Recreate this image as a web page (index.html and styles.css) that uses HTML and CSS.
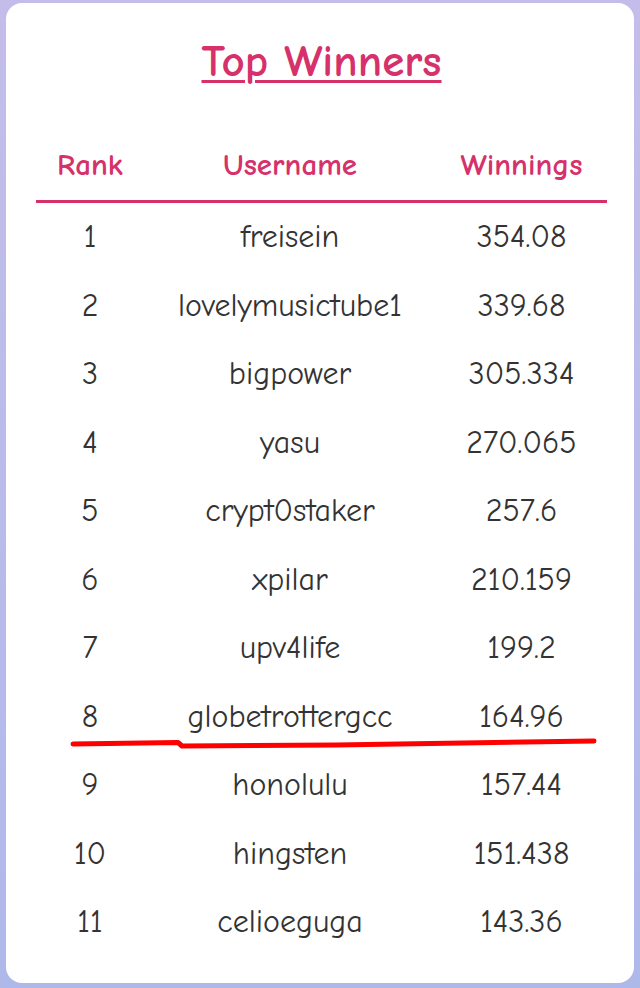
FILE: index.html
```html
<!DOCTYPE html>
<html lang="en">
<head>
<meta charset="utf-8">
<title>Top Winners</title>
<link rel="stylesheet" href="styles.css">
</head>
<body>
<main class="card">
  <h1 class="title">Top Winners</h1>
  <table class="board">
    <colgroup>
      <col class="col-rank">
      <col class="col-user">
      <col class="col-win">
    </colgroup>
    <thead>
      <tr><th>Rank</th><th>Username</th><th>Winnings</th></tr>
    </thead>
    <tbody>
      <tr><td>1</td><td>freisein</td><td>354.08</td></tr>
      <tr><td>2</td><td>lovelymusictube1</td><td>339.68</td></tr>
      <tr><td>3</td><td>bigpower</td><td>305.334</td></tr>
      <tr><td>4</td><td>yasu</td><td>270.065</td></tr>
      <tr><td>5</td><td>crypt0staker</td><td>257.6</td></tr>
      <tr><td>6</td><td>xpilar</td><td>210.159</td></tr>
      <tr><td>7</td><td>upv4life</td><td>199.2</td></tr>
      <tr><td>8</td><td>globetrottergcc</td><td>164.96</td></tr>
      <tr><td>9</td><td>honolulu</td><td>157.44</td></tr>
      <tr><td>10</td><td>hingsten</td><td>151.438</td></tr>
      <tr><td>11</td><td>celioeguga</td><td>143.36</td></tr>
    </tbody>
  </table>
  <svg class="mark" viewBox="0 0 628 980" aria-hidden="true">
    <path d="M67 741 L172 739.5 L176 743 L330 742 L588 738" />
  </svg>
</main>
</body>
</html>
```
FILE: styles.css
```css
html, body {
  margin: 0;
  padding: 0;
}

body {
  box-sizing: border-box;
  width: 640px;
  height: 988px;
  padding: 3px 6px 5px 6px;
  background: linear-gradient(180deg, #c4bde9 0%, #b8bbea 60%, #aeb9ea 100%);
  font-family: "Comic Sans MS", "Comic Neue", "Open Sans", "DejaVu Sans", sans-serif;
  color: #333333;
}

.card {
  position: relative;
  box-sizing: border-box;
  height: 980px;
  background: #ffffff;
  border-radius: 16px;
  padding: 34px 27px 0 30px;
}

.title {
  margin: 0;
  text-align: center;
  font-size: 45px;
  line-height: 48px;
  font-weight: 700;
  color: #d6316a;
  text-decoration: underline;
  text-decoration-thickness: 3px;
  text-underline-offset: 4px;
}

.board {
  width: 571px;
  margin-top: 46px;
  border-collapse: collapse;
  table-layout: fixed;
}

.col-rank { width: 108px; }
.col-user { width: 292px; }
.col-win { width: 171px; }

.board th,
.board td {
  padding: 0;
  text-align: center;
  vertical-align: middle;
  height: 68.5px;
  white-space: nowrap;
}

.board th {
  font-size: 31px;
  font-weight: 700;
  color: #d6316a;
  border-bottom: 3px solid #d6316a;
}

.board td {
  font-size: 32px;
  font-weight: 400;
  color: #333333;
}

.mark {
  position: absolute;
  left: 0;
  top: 0;
  width: 628px;
  height: 980px;
  pointer-events: none;
}

.mark path {
  fill: none;
  stroke: #ff0000;
  stroke-width: 5;
  stroke-linecap: round;
  stroke-linejoin: round;
}
```
